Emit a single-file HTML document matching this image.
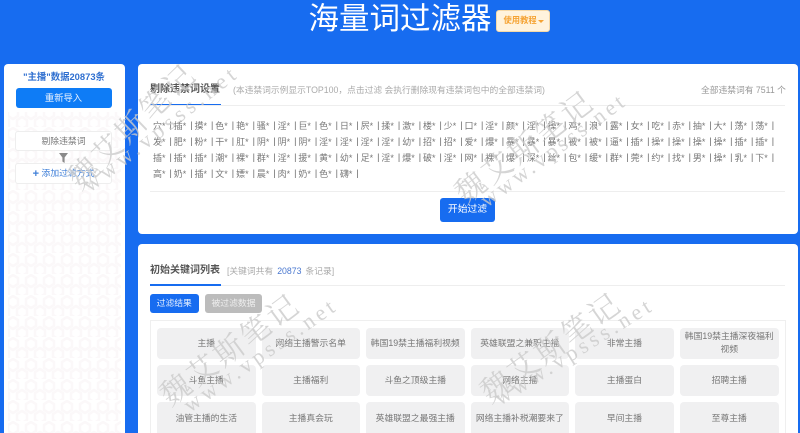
<!DOCTYPE html>
<html lang="zh"><head><meta charset="utf-8"><title>海量词过滤器</title>
<style>
*{box-sizing:border-box}
html,body{margin:0;padding:0;width:800px;height:433px;overflow:hidden;background:#176cf0}
#p{position:relative;width:800px;height:433px;overflow:hidden;background:#176cf0;font-family:"Liberation Sans","Noto Sans CJK SC",sans-serif;font-size:8.8px;color:#777;filter:blur(.25px)}
.a{position:absolute;white-space:nowrap}
.card{position:absolute;background:#fff;border-radius:4px}
h1{position:absolute;margin:0;left:250px;width:300px;top:0;text-align:center;font-weight:400;font-size:30.5px;line-height:38px;color:#fff}
.guide{left:495.5px;top:10px;width:54px;height:21.5px;background:#fff3dd;border:1px solid #f5d9a8;border-radius:3px;color:#f5a333;font-weight:700;font-size:8.3px;line-height:19.5px;padding-left:7px}
.guide:after{content:"";position:absolute;left:41px;top:8.5px;border:3px solid transparent;border-top-color:#f5a333}
.box{position:absolute;left:15px;width:97px;background:#fff;border:1px solid #eeeeee;border-radius:3px;text-align:center}
.tab{font-size:10px;font-weight:700;color:#555;line-height:14px}
.sub{color:#aaa;line-height:14px;font-size:8.75px}
.line{position:absolute;height:1px;background:#eeeeee}
.ul{position:absolute;height:1.5px;background:#176cf0}
.row{position:absolute;left:153px;height:14px;line-height:14px;white-space:nowrap;color:#777;font-size:9px}
.row i{display:inline-block;width:20.77px;font-style:normal;position:relative}
.row i:after{content:"|";position:absolute;left:16.5px;top:-1px;color:#666}
.g{position:absolute;width:98.5px;background:#f0f0f1;border-radius:4px;display:flex;align-items:center;justify-content:center;text-align:center;line-height:13.5px;color:#777;padding:0 4px}
.r1{top:327.5px;height:31.5px}.r2{top:365px;height:31px}.r3{top:402px;height:34px}
.c1{left:157px}.c2{left:261.5px}.c3{left:366px}.c4{left:470.6px}.c5{left:575.2px}.c6{left:680px}
svg.wm{position:absolute;left:0;top:0;pointer-events:none}
svg.wm text{fill:#cbcbcb;fill-opacity:.8}
</style></head><body><div id="p">
<h1>海量词过滤器</h1>
<div class="a guide">使用教程</div>

<div class="card" style="left:3.5px;top:63.5px;width:121px;height:375px;overflow:hidden">
<svg width="121" height="375" style="position:absolute;left:0;top:0"><defs><pattern id="hx" width="18" height="21" patternUnits="userSpaceOnUse"><path d="M9 1l5 3v6l-5 3-5-3V4zM0 11l5 3v6l-5 3-5-3v-6zM18 11l5 3v6l-5 3-5-3v-6z" fill="none" stroke="#fbf8f9" stroke-width="2.5"/></pattern></defs><rect x="4" y="48" width="113" height="327" fill="url(#hx)"/></svg>
</div>
<div class="a" style="left:3.5px;width:121px;top:70px;text-align:center;font-size:9.4px;font-weight:700;color:#2f6fd0;line-height:14px">"主播"数据20873条</div>
<div class="a" style="left:15.5px;top:87.5px;width:96px;height:20px;background:#0e7cf6;border-radius:3px;color:#e8f2ff;text-align:center;font-size:9.3px;line-height:20px">重新导入</div>
<div class="box" style="top:131px;height:20px;line-height:18px;color:#777">剔除违禁词</div>
<svg class="a" style="left:59px;top:152.5px" width="9" height="10" viewBox="0 0 9 10"><path d="M0 0h9L5.6 4.5V10L3.4 8.5V4.5z" fill="#8a8a8a"/></svg>
<div class="box" style="top:163px;height:21px;line-height:19px;color:#3f7fd8"><span style="font-weight:700;font-size:11px;line-height:10px;vertical-align:-1px">+</span> 添加过滤方式</div>

<div class="card" style="left:138px;top:63.5px;width:659.5px;height:170px"></div>
<div class="a tab" style="left:150px;top:83px">剔除违禁词设置</div>
<div class="a sub" style="left:233px;top:83px">(本违禁词示例显示TOP100，点击过滤 会执行删除现有违禁词包中的全部违禁词)</div>
<div class="a sub" style="left:701px;top:83px;color:#999">全部违禁词有 7511 个</div>
<div class="line" style="left:150px;top:104.5px;width:635px"></div>
<div class="ul" style="left:150px;top:103.8px;width:70.5px"></div>
<div class="row" style="top:119px"><i>穴*</i><i>插*</i><i>摸*</i><i>色*</i><i>艳*</i><i>骚*</i><i>淫*</i><i>巨*</i><i>色*</i><i>日*</i><i>屄*</i><i>揉*</i><i>激*</i><i>楼*</i><i>少*</i><i>口*</i><i>淫*</i><i>颜*</i><i>淫*</i><i>操*</i><i>鸡*</i><i>浪*</i><i>露*</i><i>女*</i><i>吃*</i><i>赤*</i><i>抽*</i><i>大*</i><i>荡*</i><i>荡*</i></div>
<div class="row" style="top:135px"><i>发*</i><i>肥*</i><i>粉*</i><i>干*</i><i>肛*</i><i>阴*</i><i>阴*</i><i>阴*</i><i>淫*</i><i>淫*</i><i>淫*</i><i>淫*</i><i>幼*</i><i>招*</i><i>招*</i><i>爱*</i><i>爆*</i><i>暴*</i><i>暴*</i><i>暴*</i><i>被*</i><i>被*</i><i>逼*</i><i>插*</i><i>操*</i><i>操*</i><i>操*</i><i>操*</i><i>插*</i><i>插*</i></div>
<div class="row" style="top:151px"><i>插*</i><i>插*</i><i>插*</i><i>潮*</i><i>裸*</i><i>群*</i><i>淫*</i><i>援*</i><i>黄*</i><i>幼*</i><i>足*</i><i>淫*</i><i>爆*</i><i>破*</i><i>淫*</i><i>网*</i><i>裸*</i><i>爆*</i><i>深*</i><i>丝*</i><i>包*</i><i>缓*</i><i>群*</i><i>莞*</i><i>约*</i><i>找*</i><i>男*</i><i>操*</i><i>乳*</i><i>下*</i></div>
<div class="row" style="top:167px"><i>高*</i><i>奶*</i><i>插*</i><i>文*</i><i>嫖*</i><i>晨*</i><i>肉*</i><i>奶*</i><i>色*</i><i>礴*</i></div>
<div class="line" style="left:150px;top:191px;width:635px"></div>
<div class="a" style="left:440px;top:197.5px;width:55px;height:24.5px;background:#176cf0;border-radius:3px;color:#fff;text-align:center;font-size:9.8px;line-height:24px">开始过滤</div>

<div class="card" style="left:138px;top:244px;width:659.5px;height:195px"></div>
<div class="a tab" style="left:150px;top:264px">初始关键词列表</div>
<div class="a sub" style="left:227px;top:264px">[关键词共有<span style="color:#4a78d0;margin:0 4px">20873</span>条记录]</div>
<div class="line" style="left:150px;top:285px;width:635px"></div>
<div class="ul" style="left:150px;top:284.3px;width:70.5px"></div>
<div class="a" style="left:150px;top:293.5px;width:48.5px;height:19px;background:#176cf0;border-radius:3px;color:#e8f1ff;text-align:center;line-height:19px">过滤结果</div>
<div class="a" style="left:205px;top:293.5px;width:57px;height:19px;background:#bcbcbc;border-radius:3px;color:#eee;text-align:center;line-height:19px">被过滤数据</div>
<div class="a" style="left:150px;top:320px;width:636px;height:120px;border:1px solid #efefef"></div>

<div class="g r1 c1">主播</div><div class="g r1 c2">网络主播警示名单</div><div class="g r1 c3">韩国19禁主播福利视频</div><div class="g r1 c4">英雄联盟之兼职主播</div><div class="g r1 c5">非常主播</div><div class="g r1 c6">韩国19禁主播深夜福利视频</div>
<div class="g r2 c1">斗鱼主播</div><div class="g r2 c2">主播福利</div><div class="g r2 c3">斗鱼之顶级主播</div><div class="g r2 c4">网络主播</div><div class="g r2 c5">主播蛋白</div><div class="g r2 c6">招聘主播</div>
<div class="g r3 c1">油管主播的生活</div><div class="g r3 c2">主播真会玩</div><div class="g r3 c3">英雄联盟之最强主播</div><div class="g r3 c4">网络主播补税潮要来了</div><div class="g r3 c5">早间主播</div><div class="g r3 c6">至尊主播</div>

<svg class="wm" width="800" height="433" font-family="'Noto Serif CJK SC','Liberation Serif',serif">
<g font-size="30" letter-spacing="3"><text transform="translate(80,191) rotate(-44)">魏艾斯笔记</text>
<text transform="translate(465,205) rotate(-37)">魏艾斯笔记</text>
<text transform="translate(170,407) rotate(-36.5)">魏艾斯笔记</text>
<text transform="translate(490,404) rotate(-35.6)">魏艾斯笔记</text></g>
<g font-size="22" font-family="'Liberation Serif',serif"><text letter-spacing="4.6" transform="translate(90,193) rotate(-38)">www.vpsss.net</text>
<text letter-spacing="3.4" transform="translate(487,208) rotate(-36.5)">www.vpsss.net</text>
<text letter-spacing="3.9" transform="translate(190,413) rotate(-35)">www.vpsss.net</text>
<text letter-spacing="4" transform="translate(500,406) rotate(-32)">www.vpsss.net</text></g>
</svg>
</div></body></html>
